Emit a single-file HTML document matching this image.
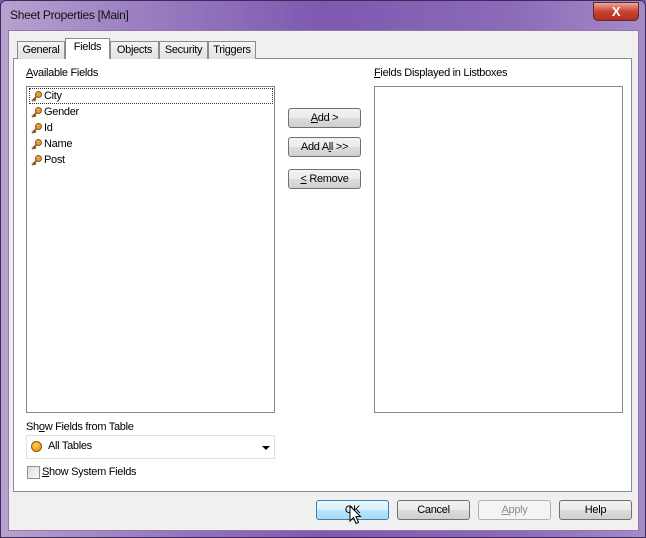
<!DOCTYPE html>
<html><head><style>
*{box-sizing:border-box;margin:0;padding:0}
body{width:646px;height:538px;overflow:hidden;font-family:"Liberation Sans",sans-serif;font-size:11px;letter-spacing:-0.3px;color:#000;background:#7a5aa6;position:relative}
.frame{position:absolute;left:0;top:0;width:646px;height:538px;border-radius:6px 6px 0 0;background:linear-gradient(90deg,#b7a2cf 0%,#9d80c2 20%,#7e59b0 50%,#8c6bb8 80%,#a58bc8 100%);border:1px solid #3d2a5a}
.title{position:absolute;left:10px;top:8px;font-size:12px;color:#111}
.close{position:absolute;left:593px;top:2px;width:46px;height:19px;border-radius:0 0 5px 5px;background:linear-gradient(#e9a99a,#c8442f 50%,#b52f1c);border:1px solid #5b2a2a;color:#fff;font-weight:bold;text-align:center;font-size:13px;line-height:17px}
.client{position:absolute;left:8px;top:30px;width:631px;height:501px;background:#f0f0f0;border:1px solid #8f7aa8}
.a{position:absolute}
.tab{position:absolute;top:41px;height:18px;border:1px solid #898c95;border-bottom:none;background:linear-gradient(#f4f4f4,#e0e0e0);text-align:center;line-height:16px}
.panel{position:absolute;left:13px;top:58px;width:619px;height:434px;background:#fff;border:1px solid #898c95}
.list{position:absolute;background:#fff;border:1px solid #828790}
.btn{position:absolute;height:20px;border:1px solid #707070;border-radius:3px;background:linear-gradient(#f2f2f2 0,#ebebeb 50%,#dddddd 51%,#cfcfcf 100%);text-align:center;line-height:18px}
.item{position:absolute;left:30px;height:16px;line-height:16px;padding-left:14px}
.key{position:absolute;left:1px;top:3px;width:11px;height:11px}
u{text-decoration:underline}
</style></head><body>
<div class="frame"></div>
<div class="title">Sheet Properties [Main]</div>
<div class="close">X</div>
<div class="client"></div>
<div class="panel"></div>
<div class="tab" style="left:17px;width:48px">General</div>
<div class="tab" style="left:65px;width:45px;top:38px;height:21px;background:#fff;z-index:2">Fields</div>
<div class="tab" style="left:110px;width:49px">Objects</div>
<div class="tab" style="left:159px;width:49px">Security</div>
<div class="tab" style="left:208px;width:48px">Triggers</div>

<div class="a" style="left:26px;top:67px"><u>A</u>vailable Fields</div>
<div class="a" style="left:374px;top:67px"><u>F</u>ields Displayed in Listboxes</div>
<div class="list" style="left:26px;top:86px;width:249px;height:327px"></div>
<div class="list" style="left:374px;top:86px;width:249px;height:327px"></div>
<div class="a" style="left:29px;top:88px;width:244px;height:16px;border:1px dotted #333"></div>
<svg width="0" height="0" style="position:absolute"><defs><g id="k"><circle cx="7.5" cy="3.5" r="3" fill="#d9a23a" stroke="#8a5a14" stroke-width="1"/><path d="M5.5 5.5 L1 10 M2.5 8.5 L4 10 M3.5 7.5 L5 9" stroke="#8a5a14" stroke-width="1.6"/></g></defs></svg>
<div class="item" style="top:88px"><svg class="key"><use href="#k"/></svg>City</div>
<div class="item" style="top:104px"><svg class="key"><use href="#k"/></svg>Gender</div>
<div class="item" style="top:120px"><svg class="key"><use href="#k"/></svg>Id</div>
<div class="item" style="top:136px"><svg class="key"><use href="#k"/></svg>Name</div>
<div class="item" style="top:152px"><svg class="key"><use href="#k"/></svg>Post</div>

<div class="btn" style="left:288px;top:108px;width:73px"><u>A</u>dd &gt;</div>
<div class="btn" style="left:288px;top:137px;width:73px">Add A<u>l</u>l &gt;&gt;</div>
<div class="btn" style="left:288px;top:169px;width:73px"><u>&lt;</u> Remove</div>

<div class="a" style="left:26px;top:421px">Sh<u>o</u>w Fields from Table</div>
<div class="a" style="left:26px;top:435px;width:249px;height:24px;border:1px solid #e0e0e0;background:#fff"></div>
<div class="a" style="left:31px;top:441px;width:11px;height:11px;border-radius:50%;background:radial-gradient(circle at 40% 35%,#ffcf5a,#e08a00);border:1px solid #8a5a00"></div>
<div class="a" style="left:48px;top:440px">All Tables</div>
<div class="a" style="left:262px;top:446px;width:0;height:0;border-left:4px solid transparent;border-right:4px solid transparent;border-top:4px solid #000"></div>
<div class="a" style="left:27px;top:466px;width:13px;height:13px;border:1px solid #8e8f8f;background:linear-gradient(135deg,#dcdcdc,#fafafa)"></div>
<div class="a" style="left:42px;top:466px"><u>S</u>how System Fields</div>

<div class="btn" style="left:316px;top:500px;width:73px;border-color:#3c7fb1;background:linear-gradient(#eaf6fd,#d9f0fc 50%,#bee6fd 51%,#a7d9f5)">OK</div>
<div class="btn" style="left:397px;top:500px;width:73px">Cancel</div>
<div class="btn" style="left:478px;top:500px;width:73px;color:#8d8d8d;border-color:#adb2b5;background:#f4f4f4"><u>A</u>pply</div>
<div class="btn" style="left:559px;top:500px;width:73px">Help</div>
<svg class="a" style="left:349px;top:505px" width="13" height="21"><path d="M1 1 L1 16 L4.5 12.5 L7 18.5 L9.5 17.5 L7 11.5 L11.5 11.5 Z" fill="#fff" stroke="#000" stroke-width="1"/></svg>
</body></html>
